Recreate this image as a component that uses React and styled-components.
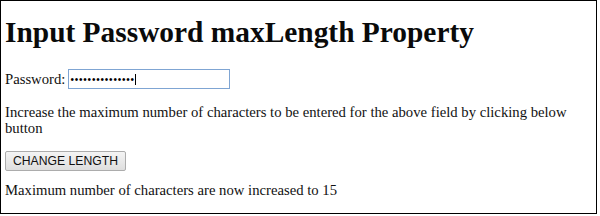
import React from 'react';
import styled, { createGlobalStyle } from 'styled-components';

const Global = createGlobalStyle`
	html, body {
		margin: 0;
		padding: 0;
		background: #ffffff;
	}
	body {
		font-family: "Liberation Serif", "Times New Roman", serif;
		color: #111;
	}
`;

const Frame = styled.div`
	box-sizing: border-box;
	width: 597px;
	height: 214px;
	border: 1px solid #000;
	padding: 0 4px;
	overflow: hidden;
`;

const Title = styled.h1`
	margin: 14px 0 0;
	font-size: 29.4px;
	line-height: 34px;
	font-weight: bold;
	color: #0a0a0a;
`;

const Row = styled.div`
	display: flex;
	align-items: center;
	gap: 3px;
	margin-top: 20px;
	font-size: 14.7px;
	line-height: 17px;
`;

const Field = styled.span`
	position: relative;
	display: inline-flex;
`;

const PasswordInput = styled.input`
	box-sizing: border-box;
	width: 162px;
	height: 20px;
	padding: 0 1px;
	border: 1px solid #7fa5d3;
	font-size: 10px;
	letter-spacing: 0.8px;
	color: #000;
	outline: none;
	background: #fff;
`;

const Caret = styled.span`
	position: absolute;
	top: 5px;
	left: ${p => p.$left}px;
	width: 1px;
	height: 11px;
	background: #000;
`;

const Note = styled.p`
	margin: 15px 0 0;
	font-size: 14.7px;
	line-height: 16px;
`;

const Button = styled.button`
	box-sizing: border-box;
	display: block;
	margin-top: 15px;
	height: 20px;
	padding: 0 7px;
	border: 1px solid #acacac;
	border-radius: 2px;
	background: linear-gradient(#f4f4f4, #dedede);
	font-family: "Liberation Sans", Arial, sans-serif;
	font-size: 12.2px;
	color: #111;
`;

const Result = styled.p`
	margin: 11px 0 0;
	font-size: 14.7px;
	line-height: 16px;
`;

export default function App() {
	return (
		<>
			<Global />
			<Frame>
				<Title>Input Password maxLength Property</Title>
				<Row>
					Password:
					<Field>
						<PasswordInput type="password" readOnly value="abcdefghijklmno" />
						<Caret $left={67} />
					</Field>
				</Row>
				<Note>
					Increase the maximum number of characters to be entered for the above field by clicking below button
				</Note>
				<Button>CHANGE LENGTH</Button>
				<Result>Maximum number of characters are now increased to 15</Result>
			</Frame>
		</>
	);
}
